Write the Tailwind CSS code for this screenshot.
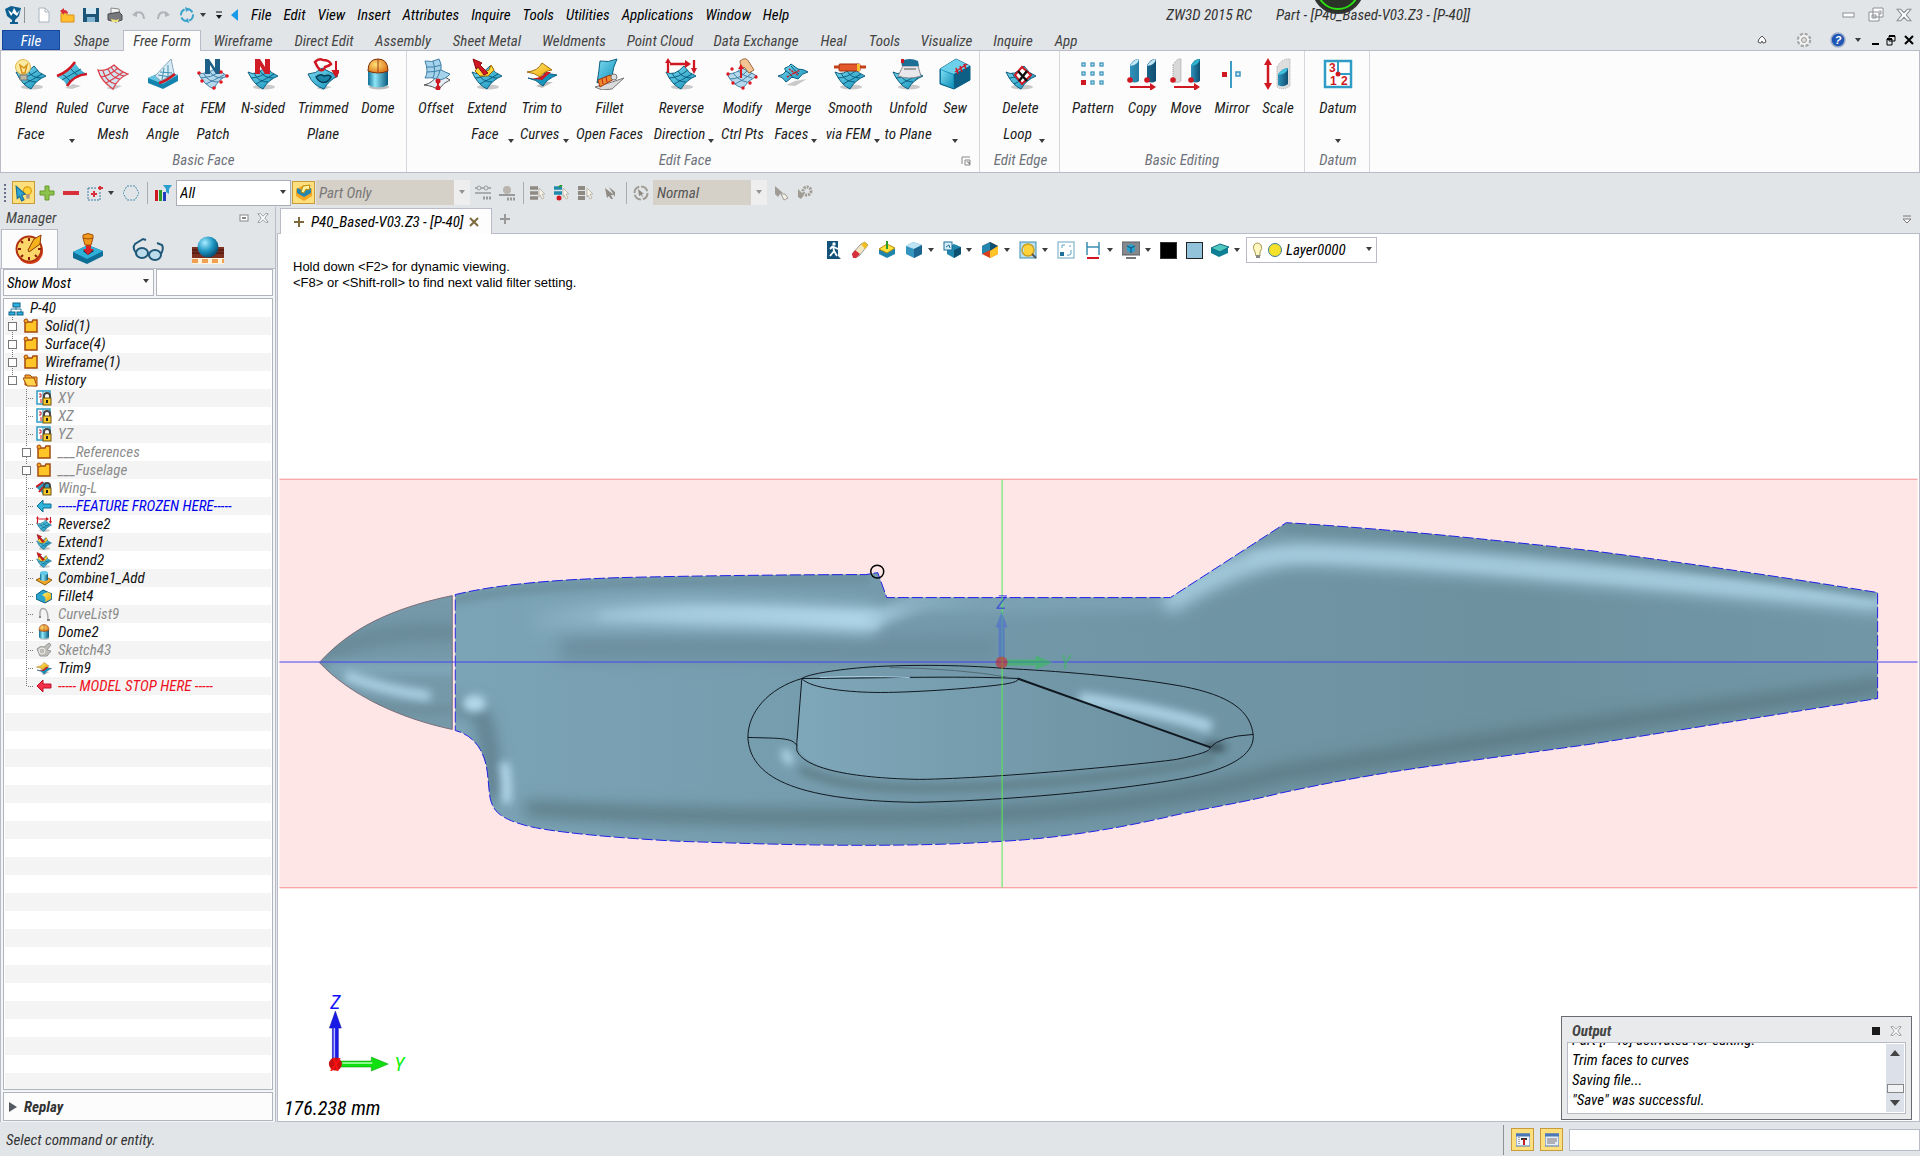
<!DOCTYPE html>
<html lang="en">
<head>
    <meta charset="UTF-8">
    <meta name="viewport" content="width=device-width, initial-scale=1.0">
    <title>ZW3D 2015 RC - [P40_Based-V03.Z3 - [P-40]]</title>
    <script src="https://cdn.jsdelivr.net/npm/@tailwindcss/browser@4"></script>
</head>
<body class="bg-[#e1e5e8] font-['Roboto_Condensed','Liberation_Sans_Narrow',Roboto,sans-serif] italic text-[15px] leading-5 text-black min-h-screen flex flex-col overflow-hidden">

<!-- Icon sprite -->
<svg class="absolute w-0 h-0" aria-hidden="true">
    <defs>
        <linearGradient id="gBlue" x1="0" y1="0" x2="1" y2="1"><stop offset="0" stop-color="#7fdcf2"/><stop offset="1" stop-color="#0f8fb8"/></linearGradient>
        <linearGradient id="gCyl" x1="0" x2="1"><stop offset="0" stop-color="#0c6f96"/><stop offset=".35" stop-color="#8fe6f8"/><stop offset="1" stop-color="#075a80"/></linearGradient>
        <linearGradient id="gDark" x1="0" x2="1"><stop offset="0" stop-color="#2f93bb"/><stop offset="1" stop-color="#0f4d70"/></linearGradient>
        <linearGradient id="gYel" x1="0" y1="0" x2="1" y2="1"><stop offset="0" stop-color="#fff07a"/><stop offset="1" stop-color="#f0a500"/></linearGradient>
        <radialGradient id="gBall" cx=".35" cy=".3" r=".8"><stop offset="0" stop-color="#a8ecff"/><stop offset=".5" stop-color="#1f97c4"/><stop offset="1" stop-color="#053c5c"/></radialGradient>
        <radialGradient id="gDome" cx=".4" cy=".4" r=".7"><stop offset="0" stop-color="#ffe37a"/><stop offset="1" stop-color="#d96a10"/></radialGradient>

        <symbol id="patch" viewBox="0 0 32 32">
            <ellipse cx="17" cy="29" rx="11" ry="2.500" fill="#000" opacity=".2"/>
            <path d="M1 14Q9 19 19 8Q24 16 31 18Q21 22 16 31Q7 27 1 14Z" fill="url(#gBlue)" stroke="#0b5f80"/>
            <path d="M4 20Q13 20 23 12M9 26Q17 22 27 16M7 15Q11 24 21 24M13 13Q17 20 26 20" fill="none" stroke="#0b5f80"/>
        </symbol>
        <symbol id="i-blend" viewBox="0 0 32 32"><use href="#patch"/><circle cx="8" cy="9" r="7.500" fill="#fbe9a0" stroke="#e0b84c"/><path d="M5 7l2 8h3l2-8-3 3z" fill="none" stroke="#d9941a" stroke-width="1.500"/><path d="M5 17h7v5H5z" fill="#b9b9a8" stroke="#777"/></symbol>
        <symbol id="i-ruled" viewBox="0 0 32 32"><path d="M9 30l8-4 8 2-9 3z" fill="#000" opacity=".2"/><path d="M1 19Q12 14 19 5Q24 13 31 16Q20 16 11 28Q9 22 1 19Z" fill="url(#gBlue)"/><path d="M6 16q5 3 9 8M14 10q5 6 9 8M6 22Q16 16 25 11" fill="none" stroke="#0b5f80"/><path d="M1 18Q12 14 19 4M11 28Q18 17 31 16" fill="none" stroke="#d01822" stroke-width="2.500"/></symbol>
        <symbol id="i-mesh" viewBox="0 0 32 32"><path d="M9 30l10-3 6 1-9 4z" fill="#000" opacity=".2"/><path d="M1 12Q8 14 17 7Q24 14 31 16Q21 20 16 31Q4 23 1 12Z" fill="#cfe5f2" stroke="#e0404a" stroke-width="1.300"/><path d="M4 19Q12 18 21 10M9 25Q17 21 26 14M6 13Q9 24 19 26M11 11Q15 20 23 21M14 9Q18 16 27 18" fill="none" stroke="#e0404a" stroke-width="1.200"/></symbol>
        <symbol id="i-angle" viewBox="0 0 32 32"><path d="M1 20l16-7 14 4v6L16 31 1 25z" fill="#1384ad"/><path d="M1 20l16-7 14 4-15 9z" fill="#62c4e0"/><path d="M8 18L24 1l3 14-13 8z" fill="#d8ecf6" stroke="#8aa8ba"/><path d="M13 14l12 1M11 17l12 2M17 10l-2 12M21 7l0 13" stroke="#3f8fb0" fill="none"/><path d="M12 25Q18 24 28 16" fill="none" stroke="#d01822" stroke-width="2.500"/></symbol>
        <symbol id="i-fem" viewBox="0 0 32 32"><path d="M1 15Q9 17 19 10L30 18Q21 21 17 31Q7 27 1 15Z" fill="#b5d9ec" stroke="#3f7fa5"/><path d="M4 20Q13 20 23 14M9 26Q17 22 27 17M7 16Q11 24 21 24M13 14Q17 20 26 20" fill="none" stroke="#3f7fa5"/><path d="M8 16V1h4l6 9V1h5v15h-4l-6-9v9z" fill="#1d5f86"/><g fill="#e01822"><circle cx="2" cy="15" r="1.800"/><circle cx="30" cy="18" r="1.800"/><circle cx="5" cy="23" r="1.800"/><circle cx="17" cy="30" r="1.800"/><circle cx="24" cy="14" r="1.800"/><circle cx="24" cy="24" r="1.800"/></g></symbol>
        <symbol id="i-nsided" viewBox="0 0 32 32"><use href="#patch"/><path d="M8 16V1h5l5 8V1h5v15h-5l-5-8v8z" fill="#d01c26"/></symbol>
        <symbol id="i-trimmed" viewBox="0 0 32 32"><path d="M9 30l10-2 6 1-9 3z" fill="#000" opacity=".2"/><path d="M1 16q8 0 14-6l16 8q-9 4-14 13Q6 28 1 16Z" fill="url(#gBlue)" stroke="#0b5f80"/><path d="M9 19q4-4 8-1 6-2 7 1-2 4-5 5-6 2-10-5z" fill="#1c85a8" stroke="#043c55" stroke-width="1.500"/><path d="M8 4q4-4 8-2 6 0 8 4-2 2-6 3-1 4-5 3-3-3-5-8z" fill="none" stroke="#d01822" stroke-width="2.500"/><path d="M29 3v13m-3-3l3 5 3-5z" stroke="#d01822" stroke-width="2" fill="#d01822"/></symbol>
        <symbol id="i-dome" viewBox="0 0 32 32"><ellipse cx="17" cy="29" rx="10" ry="2.500" fill="#000" opacity=".25"/><path d="M6 12v15q10 5 20 0V12z" fill="url(#gCyl)"/><path d="M6 13Q6 1 16 1t10 12q-10 4-20 0z" fill="url(#gDome)" stroke="#7d3208"/><path d="M16 1v13" stroke="#a03a10"/></symbol>
        <symbol id="i-offset" viewBox="0 0 32 32"><path d="M4 27q10-2 14-12l12 7q-6 2-12 10-4-4-14-5z" fill="#e5eef4" stroke="#555"/><path d="M5 3q6 2 14-2 3 5 2 11 4 2 9 4-5 6-13 6-2-3-12-2 4-6 0-17z" fill="#a5d3ec" stroke="#3f7fa5"/><path d="M13 3q3 10 0 17M6 9q8 1 15-2M7 14q8 0 14-2M20 12q-1 6-4 9" fill="none" stroke="#3f7fa5"/><path d="M18 23v7" stroke="#d01822" stroke-width="2"/><circle cx="18" cy="23" r="2.500" fill="#d01822"/><circle cx="18" cy="30" r="2.500" fill="#d01822"/></symbol>
        <symbol id="i-extend" viewBox="0 0 32 32"><use href="#patch"/><path d="M4 13l4-5 5 6 5-2 2-5 3 5-6 6-8 0z" fill="#ffd83a" stroke="#9a6a00"/><path d="M13 17l-6-8-2 2-3-10 9 4-2 2 8 8z" fill="#d01822" stroke="#8d0c14"/></symbol>
        <symbol id="i-trim" viewBox="0 0 32 32"><path d="M10 28l8-4 9 0-11 6z" fill="#000" opacity=".25"/><path d="M2 20q12 4 17-5l12 2q-10 4-14 11-7-7-15-8z" fill="#1593bc" stroke="#0b5f80"/><path d="M4 20q12 1 16-6l5 0-9 8z" fill="#d01822"/><path d="M1 14Q12 13 16 5l10 7q-8 1-12 7-5-4-13-5z" fill="url(#gYel)" stroke="#a07010"/></symbol>
        <symbol id="i-fillet" viewBox="0 0 32 32"><path d="M1 29l17-5 12-4-12 11-10 1z" fill="#dadada" stroke="#777"/><path d="M6 3Q14 5 23 1q-4 8-5 17L3 25Q5 14 6 3Z" fill="url(#gBlue)" stroke="#0b5f80"/><path d="M4 22l12-5 4 4-14 8z" fill="#e98c2b" stroke="#a03010"/><path d="M8 21l1 5m3-7l1 5" stroke="#d01822"/><circle cx="20" cy="19" r="3" fill="#ddd" stroke="#777"/></symbol>
        <symbol id="i-reverse" viewBox="0 0 32 32"><use href="#patch"/><path d="M3 15V4m26-2v9M5 6h18" stroke="#d01822" stroke-width="2.300" fill="none"/><path d="M0 5l3-5 3 5zM26 10l3 6 3-6zM20 2l6 4-6 4z" fill="#d01822"/></symbol>
        <symbol id="i-modify" viewBox="0 0 32 32"><path d="M1 16q9 0 15-6l15 8q-9 4-14 12Q7 28 1 16Z" fill="#b5d9ec" stroke="#3f7fa5"/><path d="M4 21q10 0 17-8M9 26q9-4 17-11M7 15q6 8 14 9M12 13q7 6 14 7" fill="none" stroke="#3f7fa5"/><path d="M14 3q6-5 9 1l5 8-5 3-5-6-3 2z" fill="#f3c595" stroke="#9d6a3c"/><path d="M15 20V8" stroke="#d01822" stroke-width="2"/><g fill="#e01822"><path d="M12 11l3-5 3 5z"/><circle cx="2" cy="16" r="1.700"/><circle cx="7" cy="25" r="1.700"/><circle cx="17" cy="30" r="1.700"/><circle cx="24" cy="25" r="1.700"/><circle cx="30" cy="19" r="1.700"/><circle cx="6" cy="11" r="1.700"/></g></symbol>
        <symbol id="i-merge" viewBox="0 0 32 32"><path d="M9 27l9-4 12-2-12 7z" fill="#000" opacity=".2"/><path d="M1 18q6-1 8-5-2-2-1-3 4-1 6-4l7 5q6 0 10 3-6 1-10 7l-6-2q-3 3-6 5-3-5-8-6z" fill="url(#gBlue)" stroke="#0b5f80"/><path d="M9 13q6 3 7 7M14 8q5 6 8 8" stroke="#0b5f80" fill="none"/><path d="M10 19L23 12M12 11l9 6" stroke="#d01822" stroke-width="1.500" stroke-dasharray="2 1"/></symbol>
        <symbol id="i-smooth" viewBox="0 0 32 32"><use href="#patch"/><rect x="5" y="6" width="21" height="7" rx="1" fill="#e3592b" stroke="#a02c0a"/><path d="M0 9h5M26 9h6" stroke="#c4401a" stroke-width="3"/><rect x="23" y="6" width="3" height="7" fill="#f7c030"/></symbol>
        <symbol id="i-unfold" viewBox="0 0 32 32"><use href="#patch"/><path d="M6 18l5-10h15l3 10q-12 4-23 0z" fill="#e8e8ec" stroke="#8a8a90"/><path d="M9 3q9-4 17 0l1 5H10z" fill="#1d6f96"/><rect x="9" y="1" width="3" height="4" fill="#d01822"/><path d="M12 11h12" stroke="#555"/></symbol>
        <symbol id="i-sew" viewBox="0 0 32 32"><path d="M1 11L17 1l14 7v14L15 31 1 26z" fill="#1593bc" stroke="#0b5f80"/><path d="M1 11L17 1l14 7-16 8z" fill="#6cd0ea"/><path d="M15 16v15l16-9V8z" fill="#0d5f86"/><path d="M2 12l12 5v13L2 25z" fill="url(#gBlue)"/><path d="M16 14L28 6M17 10l2 6m2-8l2 6m2-8l2 5" stroke="#d01822" stroke-width="1.500" fill="none"/></symbol>
        <symbol id="i-loop" viewBox="0 0 32 32"><use href="#patch"/><path d="M10 17l7-8 9 8-9 9z" fill="#fff" stroke="#d01822" stroke-width="2"/><path d="M13 13l9 10M22 13l-8 10" stroke="#111" stroke-width="2.500"/></symbol>
        <symbol id="i-pattern" viewBox="0 0 32 32"><g fill="#cfeaf6" stroke="#3d94bd" stroke-width="1.300"><rect x="5" y="5" width="3" height="3"/><rect x="14" y="5" width="3" height="3"/><rect x="23" y="5" width="3" height="3"/><rect x="5" y="14" width="3" height="3"/><rect x="14" y="14" width="3" height="3"/><rect x="23" y="14" width="3" height="3"/><rect x="14" y="23" width="3" height="3"/><rect x="23" y="23" width="3" height="3"/></g><rect x="4" y="22" width="5" height="5" fill="#d01822"/></symbol>
        <symbol id="i-copy" viewBox="0 0 32 32"><path d="M4 7q4-7 9-6v22q-4 3-9 0zM21 7q4-7 9-6v22q-4 3-9 0z" fill="url(#gDark)"/><path d="M4 8q4-7 9-7-1 6-9 7zM21 8q4-7 9-7-1 6-9 7z" fill="#bfe6f5"/><circle cx="4" cy="22" r="2.800" fill="#d01822"/><circle cx="21" cy="22" r="2.800" fill="#d01822"/><path d="M4 28h20v-3l6 4-6 4v-3H4z" fill="#d01822"/></symbol>
        <symbol id="i-move" viewBox="0 0 32 32"><path d="M3 7q4-7 8-6v22q-4 3-8 0z" fill="#d8d8d8" stroke="#999" stroke-dasharray="1 1"/><path d="M21 7q4-7 9-6v22q-4 3-9 0z" fill="url(#gDark)"/><path d="M21 8q4-7 9-7-1 6-9 7z" fill="#2fb3cc"/><circle cx="3" cy="22" r="2.800" fill="#d01822"/><circle cx="21" cy="22" r="2.800" fill="#d01822"/><path d="M4 28h20v-3l6 4-6 4v-3H4z" fill="#d01822"/></symbol>
        <symbol id="i-mirror" viewBox="0 0 32 32"><path d="M15 3v27" stroke="#3d9cc4" stroke-width="2"/><rect x="6" y="14" width="5" height="5" fill="#d01822"/><rect x="20" y="14" width="4" height="4" fill="#cfeaf6" stroke="#3d94bd" stroke-width="1.500"/></symbol>
        <symbol id="i-scale" viewBox="0 0 32 32"><path d="M6 4v24" stroke="#d01822" stroke-width="2.500"/><path d="M2 7l4-7 4 7zM2 25l4 7 4-7z" fill="#d01822"/><path d="M15 9Q20 0 28 1v27q-7 5-13 1z" fill="#dedede" stroke="#aaa" stroke-dasharray="1 1"/><path d="M16 16q5-6 10-6v16q-5 4-10 1z" fill="url(#gDark)"/><path d="M16 17q4-7 10-7-1 6-10 7z" fill="#3fc0dd"/></symbol>
        <symbol id="i-datum" viewBox="0 0 32 32"><rect x="3" y="3" width="26" height="26" fill="#fff" stroke="#2e9cc4" stroke-width="2.500"/><path d="M16 3v13h13" fill="none" stroke="#2e9cc4" stroke-width="2"/><circle cx="16" cy="16" r="2.500" fill="#d01822"/><g fill="#d01822" font-family="Liberation Sans" font-style="normal" font-weight="bold" font-size="12"><text x="7" y="14">3</text><text x="8" y="27">1</text><text x="19" y="27">2</text></g></symbol>

        <symbol id="i-folder" viewBox="0 0 16 16"><path d="M2 4h7l1-2h4v12H2z" fill="#ffc425" stroke="#a34a10" stroke-width="1.500"/><circle cx="3" cy="3" r="2" fill="#f5a623" stroke="#a34a10"/></symbol>
        <symbol id="i-folderopen" viewBox="0 0 16 16"><path d="M2 13V3h5l2 2h5v9z" fill="#f5a623" stroke="#a34a10"/><path d="M0 6h11l3 8H4z" fill="#ffd34a" stroke="#a34a10"/></symbol>
        <symbol id="i-root" viewBox="0 0 16 16"><path d="M8 7v3M3 12V9h10v3" fill="none" stroke="#2e7fa0"/><rect x="5" y="3" width="7" height="4" fill="#2cb4e0" stroke="#0f5f85"/><rect x="1" y="12" width="6" height="3" fill="#2cb4e0" stroke="#0f5f85"/><rect x="9" y="12" width="6" height="3" fill="#2cb4e0" stroke="#0f5f85"/></symbol>
        <symbol id="i-lock" viewBox="0 0 16 16"><path d="M8 9V6q0-3 3-3t3 3v3" fill="none" stroke="#444" stroke-width="2"/><rect x="7" y="8" width="8" height="7" fill="#f7c92a" stroke="#6b5310"/><path d="M11 10v3" stroke="#222" stroke-width="2"/></symbol>
        <symbol id="i-plane" viewBox="0 0 16 16"><rect x="1" y="1" width="13" height="13" fill="#fff" stroke="#2e9cc4" stroke-width="1.500"/><path d="M7 1v13" stroke="#2e9cc4"/><path d="M3 4h2v3H3m2 2v4" stroke="#d01822" fill="none"/><use href="#i-lock"/></symbol>
        <symbol id="i-wing" viewBox="0 0 16 16"><path d="M0 7l7-5 8 4-8 8z" fill="#2b9cc0"/><path d="M0 7l7-5M3 12l4-5" stroke="#d01822" stroke-width="2"/><use href="#i-lock"/></symbol>
        <symbol id="i-left" viewBox="0 0 16 16"><path d="M1 8l6-6v4h8v4H7v4z" fill="#2fb4dc" stroke="#0f6f95"/></symbol>
        <symbol id="i-stop" viewBox="0 0 16 16"><path d="M1 8l6-6v4h8v4H7v4z" fill="#f2304a" stroke="#c01028"/></symbol>
        <symbol id="i-combine" viewBox="0 0 16 16"><path d="M0 10l8-4 8 4-7 5z" fill="#f0a72a" stroke="#95600c"/><path d="M4 3v7q4 2 8 0V3z" fill="url(#gCyl)"/><ellipse cx="8" cy="3" rx="4" ry="2" fill="#5fc8e6"/></symbol>
        <symbol id="i-fillet4" viewBox="0 0 16 16"><path d="M0 7l7-5 9 4v5l-7 4-9-4z" fill="#2aa4cc" stroke="#0b5f80"/><path d="M6 7q6-5 9-1l0 5-6 3q2-5-3-7z" fill="url(#gYel)"/></symbol>
        <symbol id="i-curve" viewBox="0 0 16 16"><path d="M4 10V6q1-5 5-3 3 2 3 11" fill="none" stroke="#aaa" stroke-width="1.500"/><path d="M3 11h2m6 3h3" stroke="#888" stroke-width="2"/></symbol>
        <symbol id="i-sketch" viewBox="0 0 16 16"><path d="M1 7q3-4 7-2l5-4 2 2-4 5 4 1-4 5H4z" fill="#bdbdb5" stroke="#999"/><circle cx="6" cy="9" r="3" fill="none" stroke="#eee"/></symbol>
        <symbol id="i-arrow" viewBox="0 0 8 8"><path d="M1 2h6L4 6z" fill="#3c3c3c"/></symbol>
        <symbol id="i-cursor" viewBox="0 0 16 16"><path d="M9 3l6 6-3 0 2 4-2 1-2-4-1 2z" fill="#f8f4ea" stroke="#bdb9ae"/></symbol>
        <symbol id="i-cube" viewBox="0 0 18 18"><path d="M1 5l7-4 9 3v9l-8 4-8-4z" fill="#3494c0"/><path d="M1 5l7-4 9 3-8 4z" fill="#bfe3f2"/><path d="M9 8l8-4v9l-8 4z" fill="#1b6590"/></symbol>
        <symbol id="i-close" viewBox="0 0 14 14"><path d="M1 2h3l3 3 3-3h3L9 7l4 5h-3L7 9l-3 3H1l4-5z" fill="#fff" stroke="#8b8f94"/></symbol>
    </defs>
</svg>

<!-- Quick access bar and menu -->
<header class="relative h-[30px] flex items-center pl-1 shrink-0 whitespace-nowrap">
    <svg class="w-5 h-5" viewBox="0 0 20 20"><path d="M1 4l6-3 10 2-2 8-4 4v2h3v2H6v-2h2v-2L3 11z" fill="#0d5f90"/><path d="M4 5l4 3 2-5 3 5 3-3-3 6-4-3-2 3z" fill="#fff"/></svg>
    <span class="w-px h-4 bg-[#8d9196] mr-1.5"></span>
    <button class="w-6 h-5 grid place-items-center" aria-label="New"><svg class="w-4 h-4" viewBox="0 0 16 16"><path d="M4 1h6l4 4v10H4z" fill="#fff" stroke="#a9b4bd"/><path d="M10 1v4h4" fill="none" stroke="#a9b4bd"/></svg></button>
    <button class="w-6 h-5 grid place-items-center" aria-label="Open"><svg class="w-4 h-4" viewBox="0 0 16 16"><path d="M2 6h5l1 2h7v7H2z" fill="#ffbf2e" stroke="#d8901a"/><path d="M9 7Q9 3 5 3V1L1 4l4 4V6q3 0 4 1z" fill="#d8303a"/></svg></button>
    <button class="w-6 h-5 grid place-items-center" aria-label="Save"><svg class="w-4 h-4" viewBox="0 0 16 16"><path d="M0 1h16v14H0z" fill="#1c5578"/><path d="M3 1h10v6H3z" fill="#d4e8f3"/><path d="M4 10h8v5H4z" fill="#7fb3cf"/></svg></button>
    <button class="w-6 h-5 grid place-items-center" aria-label="Print"><svg class="w-4 h-4" viewBox="0 0 16 16"><path d="M4 1l8 1 1 5H4z" fill="#f4f4f4" stroke="#888"/><path d="M1 7l11-2 3 3v5l-6 2-8-2z" fill="#77797c" stroke="#4a4a4a"/><path d="M4 12l5 1 3-1-1 3H5z" fill="#f0e27a"/></svg></button>
    <button class="w-6 h-5 grid place-items-center" aria-label="Undo"><svg class="w-4 h-4" viewBox="0 0 16 16"><path d="M3 7q9-5 10 5" fill="none" stroke="#b0b4b8" stroke-width="2"/><path d="M1 8l5-4v6z" fill="#b0b4b8"/></svg></button>
    <button class="w-6 h-5 grid place-items-center" aria-label="Redo"><svg class="w-4 h-4" viewBox="0 0 16 16"><path d="M13 7Q4 2 3 12" fill="none" stroke="#b0b4b8" stroke-width="2"/><path d="M15 8l-5-4v6z" fill="#b0b4b8"/></svg></button>
    <button class="w-6 h-5 grid place-items-center" aria-label="Regenerate"><svg class="w-4 h-4" viewBox="0 0 16 16"><circle cx="8" cy="8" r="6" fill="none" stroke="#3ba3cc" stroke-width="2" stroke-dasharray="7 2"/><path d="M6 0l5 2-4 3zM10 16l-5-2 4-3z" fill="#3ba3cc"/></svg></button>
    <svg class="w-2 h-2"><use href="#i-arrow"/></svg>
    <svg class="w-2 h-3 ml-2" viewBox="0 0 8 12"><path d="M1 3h6" stroke="#111"/><path d="M1 6h6L4 10z" fill="#111"/></svg>
    <svg class="w-2 h-3 ml-2 mr-3" viewBox="0 0 8 12"><path d="M7 0v12L0 6z" fill="#1a9ae8"/></svg>
    <nav class="flex gap-3">
        <a href="#">File</a><a href="#">Edit</a><a href="#">View</a><a href="#">Insert</a><a href="#">Attributes</a><a href="#">Inquire</a><a href="#">Tools</a><a href="#">Utilities</a><a href="#">Applications</a><a href="#">Window</a><a href="#">Help</a>
    </nav>
    <div class="ml-auto flex items-center text-[#333]">
        <span class="mr-6">ZW3D 2015 RC</span>
        <span class="w-[566px]">Part - [P40_Based-V03.Z3 - [P-40]]</span>
    </div>
    <div class="flex items-center gap-3 mr-2.5 w-[68px] justify-between">
        <button aria-label="Minimize"><svg class="w-3.5 h-3.5" viewBox="0 0 14 14"><rect x="1" y="5" width="11" height="4" fill="#fff" stroke="#8b8f94"/></svg></button>
        <button aria-label="Restore"><svg class="w-4 h-4" viewBox="0 0 16 16"><path d="M5 1h10v9H5zM1 5h10v9H1z" fill="#fff" stroke="#8b8f94"/><path d="M4 8h4v3H4zM11 4h2v3h-2" fill="none" stroke="#8b8f94"/></svg></button>
        <button aria-label="Close"><svg class="w-4 h-4"><use href="#i-close"/></svg></button>
    </div>
    <!-- Recording badge over the title -->
    <div class="absolute top-[-38px] right-[556px] w-[52px] h-[52px] rounded-full bg-[#2b3328] border-2 border-[#333] p-0.5"><div class="w-full h-full rounded-full border-2 border-[#2ae010]"></div></div>
</header>

<!-- Ribbon tabs -->
<nav class="h-[21px] flex items-stretch pl-0.5 shrink-0 text-[#444] leading-[22px] border-b border-[#b9bcc8] whitespace-nowrap">
    <a href="#" class="w-[58px] bg-[#2962b8] text-white border border-[#1647a0] leading-5 text-center">File</a>
    <a href="#" class="w-[63px] text-center">Shape</a>
    <a href="#" class="w-[78px] -mb-px bg-[#fcfcfc] border border-b-0 border-[#b9bcc8] leading-5 text-center">Free Form</a>
    <a href="#" class="w-[84px] text-center">Wireframe</a>
    <a href="#" class="w-[78px] text-center">Direct Edit</a>
    <a href="#" class="w-[80px] text-center">Assembly</a>
    <a href="#" class="w-[88px] text-center">Sheet Metal</a>
    <a href="#" class="w-[86px] text-center">Weldments</a>
    <a href="#" class="w-[86px] text-center">Point Cloud</a>
    <a href="#" class="w-[106px] text-center">Data Exchange</a>
    <a href="#" class="w-[49px] text-center">Heal</a>
    <a href="#" class="w-[53px] text-center">Tools</a>
    <a href="#" class="w-[71px] text-center">Visualize</a>
    <a href="#" class="w-[62px] text-center">Inquire</a>
    <a href="#" class="w-[44px] text-center">App</a>
    <div class="ml-auto flex items-center mr-1.5">
        <svg class="w-3 h-3 mr-7" viewBox="0 0 12 12"><path d="M2 8q0-3 4-6 4 3 4 6l-2 1H7L6 7 5 9H4z" fill="#fff" stroke="#555"/></svg>
        <svg class="w-4 h-4 mr-[18px]" viewBox="0 0 16 16"><circle cx="8" cy="8" r="6" fill="#f2f2f2" stroke="#a5a5a5" stroke-width="2.500" stroke-dasharray="3 1.700"/><circle cx="8" cy="8" r="5" fill="#f2f2f2"/><circle cx="8" cy="8" r="2.500" fill="#ddd" stroke="#999"/></svg>
        <svg class="w-4 h-4 mr-2" viewBox="0 0 16 16"><circle cx="8" cy="8" r="7" fill="#1f55b5" stroke="#9fb0c8" stroke-width="1.500"/><text x="8" y="12" text-anchor="middle" font-size="11" font-weight="bold" fill="#fff" font-family="Liberation Sans">?</text></svg>
        <svg class="w-2 h-2 mr-2"><use href="#i-arrow"/></svg>
        <svg class="w-2.5 h-3 mr-1.5" viewBox="0 0 10 12"><path d="M2 10h7" stroke="#000" stroke-width="2"/></svg>
        <svg class="w-2.5 h-3 mr-2" viewBox="0 0 10 12"><path d="M3 2h6v5H3zM1 5h5v6H1z" fill="#e1e5e8" stroke="#000"/><path d="M3 2h6M1 5h5" stroke="#000" stroke-width="2"/></svg>
        <svg class="w-2.5 h-3" viewBox="0 0 10 12"><path d="M1 2l8 8M9 2l-8 8" stroke="#000" stroke-width="2"/></svg>
    </div>
</nav>

<!-- Ribbon -->
<section class="h-[122px] flex shrink-0 bg-[#fcfcfc] border-x border-b border-[#b9bcc8] leading-[26px] text-center whitespace-nowrap text-[#1c1c1c]">
    <div class="w-[406px] flex flex-col border-r border-[#d5d7dc]">
        <div class="flex pl-[9px] pt-[7px] h-[98px] shrink-0">
            <button class="w-[42px] flex flex-col items-center"><svg class="w-8 h-8 mb-[5px] shrink-0"><use href="#i-blend"/></svg><span>Blend</span><span>Face</span></button>
            <button class="w-[40px] flex flex-col items-center"><svg class="w-8 h-8 mb-[5px] shrink-0"><use href="#i-ruled"/></svg><span>Ruled</span><svg class="w-2 h-2 mt-4"><use href="#i-arrow"/></svg></button>
            <button class="w-[42px] flex flex-col items-center"><svg class="w-8 h-8 mb-[5px] shrink-0"><use href="#i-mesh"/></svg><span>Curve</span><span>Mesh</span></button>
            <button class="w-[58px] flex flex-col items-center"><svg class="w-8 h-8 mb-[5px] shrink-0"><use href="#i-angle"/></svg><span>Face at</span><span>Angle</span></button>
            <button class="w-[42px] flex flex-col items-center"><svg class="w-8 h-8 mb-[5px] shrink-0"><use href="#i-fem"/></svg><span>FEM</span><span>Patch</span></button>
            <button class="w-[58px] flex flex-col items-center"><svg class="w-8 h-8 mb-[5px] shrink-0"><use href="#i-nsided"/></svg><span>N-sided</span></button>
            <button class="w-[62px] flex flex-col items-center"><svg class="w-8 h-8 mb-[5px] shrink-0"><use href="#i-trimmed"/></svg><span>Trimmed</span><span>Plane</span></button>
            <button class="w-[48px] flex flex-col items-center"><svg class="w-8 h-8 mb-[5px] shrink-0"><use href="#i-dome"/></svg><span>Dome</span></button>
        </div>
        <div class="text-[#6d7179] leading-[23px]">Basic Face</div>
    </div>
    <div class="w-[573px] flex flex-col border-r border-[#d5d7dc] relative">
        <div class="flex pl-[5px] pt-[7px] h-[98px] shrink-0">
            <button class="w-[48px] flex flex-col items-center"><svg class="w-8 h-8 mb-[5px] shrink-0"><use href="#i-offset"/></svg><span>Offset</span></button>
            <button class="w-[54px] flex flex-col items-center"><svg class="w-8 h-8 mb-[5px] shrink-0"><use href="#i-extend"/></svg><span>Extend</span><span class="flex items-end pl-3">Face<svg class="w-2 h-2 ml-2 mb-0.5"><use href="#i-arrow"/></svg></span></button>
            <button class="w-[56px] flex flex-col items-center"><svg class="w-8 h-8 mb-[5px] shrink-0"><use href="#i-trim"/></svg><span>Trim to</span><span class="flex items-end pl-1.5">Curves<svg class="w-2 h-2 ml-0.5 mb-0.5"><use href="#i-arrow"/></svg></span></button>
            <button class="w-[80px] flex flex-col items-center"><svg class="w-8 h-8 mb-[5px] shrink-0"><use href="#i-fillet"/></svg><span>Fillet</span><span>Open Faces</span></button>
            <button class="w-[64px] flex flex-col items-center"><svg class="w-8 h-8 mb-[5px] shrink-0"><use href="#i-reverse"/></svg><span>Reverse</span><span class="flex items-end pl-1.5">Direction<svg class="w-2 h-2 ml-0.5 mb-0.5"><use href="#i-arrow"/></svg></span></button>
            <button class="w-[58px] flex flex-col items-center"><svg class="w-8 h-8 mb-[5px] shrink-0"><use href="#i-modify"/></svg><span>Modify</span><span>Ctrl Pts</span></button>
            <button class="w-[44px] flex flex-col items-center"><svg class="w-8 h-8 mb-[5px] shrink-0"><use href="#i-merge"/></svg><span>Merge</span><span class="flex items-end pl-1.5">Faces<svg class="w-2 h-2 ml-0.5 mb-0.5"><use href="#i-arrow"/></svg></span></button>
            <button class="w-[70px] flex flex-col items-center"><svg class="w-8 h-8 mb-[5px] shrink-0"><use href="#i-smooth"/></svg><span>Smooth</span><span class="flex items-end pl-1.5">via FEM<svg class="w-2 h-2 ml-0.5 mb-0.5"><use href="#i-arrow"/></svg></span></button>
            <button class="w-[46px] flex flex-col items-center"><svg class="w-8 h-8 mb-[5px] shrink-0"><use href="#i-unfold"/></svg><span>Unfold</span><span>to Plane</span></button>
            <button class="w-[48px] flex flex-col items-center"><svg class="w-8 h-8 mb-[5px] shrink-0"><use href="#i-sew"/></svg><span>Sew</span><svg class="w-2 h-2 mt-4"><use href="#i-arrow"/></svg></button>
        </div>
        <div class="text-[#6d7179] leading-[23px] pr-4">Edit Face</div>
        <svg class="absolute right-2 bottom-1.5 w-2.5 h-2.5" viewBox="0 0 10 10"><path d="M1 8V1h8M4 4h5v5H4z" fill="none" stroke="#888"/><path d="M5 5l4 4V6z" fill="#888"/></svg>
    </div>
    <div class="w-[80px] flex flex-col border-r border-[#d5d7dc]">
        <div class="flex justify-center pl-0.5 pt-[7px] h-[98px] shrink-0">
            <button class="flex flex-col items-center"><svg class="w-8 h-8 mb-[5px] shrink-0"><use href="#i-loop"/></svg><span>Delete</span><span class="flex items-end pl-2">Loop<svg class="w-2 h-2 ml-1.5 mb-0.5"><use href="#i-arrow"/></svg></span></button>
        </div>
        <div class="text-[#6d7179] leading-[23px] pl-0.5">Edit Edge</div>
    </div>
    <div class="w-[245px] flex flex-col border-r border-[#d5d7dc]">
        <div class="flex pl-[7px] pt-[7px] h-[98px] shrink-0">
            <button class="w-[52px] flex flex-col items-center"><svg class="w-8 h-8 mb-[5px] shrink-0"><use href="#i-pattern"/></svg><span>Pattern</span></button>
            <button class="w-[46px] flex flex-col items-center"><svg class="w-8 h-8 mb-[5px] shrink-0"><use href="#i-copy"/></svg><span>Copy</span></button>
            <button class="w-[42px] flex flex-col items-center"><svg class="w-8 h-8 mb-[5px] shrink-0"><use href="#i-move"/></svg><span>Move</span></button>
            <button class="w-[50px] flex flex-col items-center"><svg class="w-8 h-8 mb-[5px] shrink-0"><use href="#i-mirror"/></svg><span>Mirror</span></button>
            <button class="w-[42px] flex flex-col items-center"><svg class="w-8 h-8 mb-[5px] shrink-0"><use href="#i-scale"/></svg><span>Scale</span></button>
        </div>
        <div class="text-[#6d7179] leading-[23px]">Basic Editing</div>
    </div>
    <div class="w-[65px] flex flex-col border-r border-[#d5d7dc]">
        <div class="flex justify-center pl-0.5 pt-[7px] h-[98px] shrink-0">
            <button class="flex flex-col items-center"><svg class="w-8 h-8 mb-[5px] shrink-0"><use href="#i-datum"/></svg><span>Datum</span><svg class="w-2 h-2 mt-4"><use href="#i-arrow"/></svg></button>
        </div>
        <div class="text-[#6d7179] leading-[23px] pl-0.5">Datum</div>
    </div>
</section>

<!-- Selection toolbar -->
<section class="h-[34px] flex items-center pt-[5px] pl-1 shrink-0">
    <svg class="w-1 h-5 mr-1" viewBox="0 0 4 20"><path d="M1 1v18" stroke="#6b6f8c" stroke-width="2" stroke-dasharray="2 2"/></svg>
    <button class="w-[23px] h-[23px] bg-[#fddf7d] border border-[#c79a3c] grid place-items-center" aria-label="Pick"><svg class="w-[18px] h-[18px]" viewBox="0 0 16 16"><circle cx="11" cy="6" r="3.500" fill="#ffd23a" stroke="#d89a10"/><path d="M10 9h3v4h-3z" fill="#a98"/><path d="M1 2l8 7-3 1 2 4-2 1-2-4-2 2z" fill="#2fa4d0" stroke="#1a6f98"/></svg></button>
    <button class="w-6 grid place-items-center" aria-label="Add"><svg class="w-4 h-4" viewBox="0 0 16 16"><path d="M6 1h4v5h5v4h-5v5H6v-5H1V6h5z" fill="#8bc34a" stroke="#6a9a2c"/></svg></button>
    <button class="w-6 grid place-items-center" aria-label="Remove"><svg class="w-4 h-4" viewBox="0 0 16 16"><path d="M0 6h16v4H0z" fill="#d8303a"/></svg></button>
    <button class="w-6 grid place-items-center" aria-label="Window pick"><svg class="w-4 h-4" viewBox="0 0 16 16"><path d="M1 3h9M1 3v12h12V7" fill="none" stroke="#3a7f9e" stroke-dasharray="2 1"/><path d="M7 6v6M4 9h6M13 1v4M11 3h5" stroke="#d8303a" stroke-width="2"/></svg></button>
    <svg class="w-2 h-2"><use href="#i-arrow"/></svg>
    <button class="w-8 grid place-items-center" aria-label="Polygon pick"><svg class="w-4 h-4" viewBox="0 0 16 16"><path d="M4 1h8l4 7-4 7H4L0 8z" fill="none" stroke="#4a8fb0" stroke-dasharray="2 1"/></svg></button>
    <span class="w-px h-[22px] bg-[#a9adb2] mr-1.5"></span>
    <svg class="w-[18px] h-[18px] mr-1" viewBox="0 0 18 18"><path d="M1 6h3v11H1z" fill="#d01822"/><path d="M5 6h3v11H5z" fill="#2a9a2a"/><path d="M9 8h3v9H9z" fill="#1f3fbf"/><path d="M9 1h9l-3 4v5l-3-2V5z" fill="#2aa0d0"/></svg>
    <div class="relative"><select aria-label="Filter" class="appearance-none w-[115px] h-[26px] bg-white border border-[#a9adb8] pl-[3px] italic rounded-none"><option>All</option></select><svg class="absolute right-1 top-2 w-2 h-2"><use href="#i-arrow"/></svg></div>
    <button class="w-[23px] h-[23px] bg-[#fddf7d] border border-[#c79a3c] grid place-items-center mx-px" aria-label="Part scope"><svg class="w-[18px] h-[18px]" viewBox="0 0 18 18"><path d="M1 5l8-4 8 4v7l-8 5-8-5z" fill="#f5a623"/><path d="M2 4v5l7 4 7-4V4l-7 3z" fill="#2387b0"/><path d="M8 2l7-1-1 5-3-1-2 4-3-1z" fill="#fff3a0" stroke="#b98a10"/></svg></button>
    <div class="relative"><select aria-label="Scope" disabled class="appearance-none w-[154px] h-[25px] bg-[#d5d0c8] text-[#777] pl-[3px] italic rounded-none opacity-100 border-r-[16px] border-[#eeeeee]"><option>Part Only</option></select><svg class="absolute right-1 top-2 w-2 h-2 opacity-50"><use href="#i-arrow"/></svg></div>
    <svg class="w-4 h-4 ml-[5px] mr-2" viewBox="0 0 16 16"><path d="M0 3h16M0 8h16" stroke="#999" stroke-width="1.500"/><circle cx="4" cy="3" r="2" fill="#e1e5e8" stroke="#999"/><circle cx="11" cy="3" r="2" fill="#e1e5e8" stroke="#999"/><path d="M8 13h8" stroke="#999" stroke-width="3" stroke-dasharray="2 1"/></svg>
    <svg class="w-4 h-4 mr-2" viewBox="0 0 16 16"><circle cx="8" cy="5" r="4" fill="#b9b5ae"/><path d="M0 10h16" stroke="#999" stroke-width="2"/><path d="M8 14h8" stroke="#999" stroke-width="3" stroke-dasharray="2 1"/></svg>
    <span class="w-px h-[22px] bg-[#a9adb2] mr-1.5"></span>
    <svg class="w-4 h-4 mr-2" viewBox="0 0 16 16"><path d="M0 3h8M0 8h8M0 13h8" stroke="#8f8b83" stroke-width="3.500"/><use href="#i-cursor"/></svg>
    <svg class="w-4 h-4 mr-2" viewBox="0 0 16 16"><path d="M0 3h8M0 8h8" stroke="#1f8aae" stroke-width="3.500"/><path d="M5 2l3-2" stroke="#2a9a2a" stroke-width="2"/><circle cx="5" cy="13" r="2.500" fill="#d01822"/><use href="#i-cursor"/></svg>
    <svg class="w-4 h-4 mr-2" viewBox="0 0 16 16"><path d="M0 3h7M0 8h7M0 13h7" stroke="#8f8b83" stroke-width="4"/><use href="#i-cursor"/></svg>
    <svg class="w-4 h-4 mr-2" viewBox="0 0 16 16"><path d="M3 3l9 7-3 0 2 4-2 0-2-3-2 2zM7 2l6 5v5z" fill="#8f8b83"/></svg>
    <span class="w-px h-[22px] bg-[#a9adb2] mr-1.5"></span>
    <svg class="w-4 h-4 mr-1" viewBox="0 0 16 16"><circle cx="8" cy="8" r="6.500" fill="none" stroke="#a09c95" stroke-width="2" stroke-dasharray="8 2"/><path d="M5 4l6 5-2 0 1 4-2-3-2 1z" fill="#8f8b83"/></svg>
    <div class="relative"><select aria-label="Mode" disabled class="appearance-none w-[114px] h-[25px] bg-[#d5d0c8] text-[#555] pl-1 italic rounded-none opacity-100 border-r-[16px] border-[#eeeeee]"><option>Normal</option></select><svg class="absolute right-1 top-2 w-2 h-2 opacity-50"><use href="#i-arrow"/></svg></div>
    <svg class="w-4 h-4 ml-1.5 mr-2" viewBox="0 0 16 16"><path d="M2 1l8 7-3 1-2 3-3-3z" fill="#a09c95"/><path d="M8 9l3 6 4-2-3-4z" fill="#f4f0e8" stroke="#a09c95"/></svg>
    <svg class="w-4 h-4" viewBox="0 0 16 16"><circle cx="10" cy="6" r="4" fill="none" stroke="#a09c95" stroke-width="3" stroke-dasharray="2 1"/><path d="M1 4l6 6-3 4-3-2z" fill="#a09c95"/></svg>
</section>

<main class="flex-1 flex min-h-0">
    <!-- Manager -->
    <aside class="w-[276px] flex flex-col shrink-0 border-r border-[#b9bcc8]">
        <div class="h-[22px] flex items-center pl-1.5 pr-1.5 text-[#444]">Manager
            <svg class="w-2.5 h-2.5 ml-auto mr-2" viewBox="0 0 10 10"><rect x="1" y="2" width="8" height="6" fill="#fff" stroke="#888"/><path d="M3 5h4" stroke="#888" stroke-width="2"/></svg>
            <svg class="w-3 h-3"><use href="#i-close"/></svg>
        </div>
        <div class="h-[39px] flex pl-px relative">
            <button class="w-[57px] bg-[#fcfcfc] border border-b-0 border-[#b9bcc8] grid place-items-center" aria-label="History"><svg class="w-8 h-8" viewBox="0 0 32 32"><circle cx="16" cy="18" r="13" fill="#d8401c"/><circle cx="15" cy="16" r="12.500" fill="#fbd76a" stroke="#b03010" stroke-width="2"/><path d="M15 5v3m0 16v3M4 16h3m17 0h3M7 8l2 2m12 12l2 2M7 24l2-2" stroke="#8d1c08" stroke-width="2"/><path d="M14 17L20 6l7-4-1 9-11 8z" fill="#f5b21a" stroke="#8d3a08"/></svg></button>
            <button class="w-[60px] grid place-items-center" aria-label="Roles"><svg class="w-8 h-8" viewBox="0 0 32 32"><path d="M1 19l15-7 15 6v5L15 31 1 25z" fill="#0d6f96"/><path d="M1 19l15-7 15 6-16 8z" fill="#2fb0d8"/><path d="M11 18l5-3 6 3-6 4z" fill="#062f45"/><path d="M16 22l-5-6h3v-4h5v4h3z" fill="#d8202a"/><path d="M11 2q5-3 10 0v3l-2 7h-6l-2-7z" fill="#f29a1c" stroke="#a0500a"/><path d="M11 5q5 2 10 0" stroke="#a0500a" fill="none"/></svg></button>
            <button class="w-[60px] grid place-items-center" aria-label="Visual"><svg class="w-8 h-8" viewBox="0 0 32 32"><ellipse cx="10" cy="20" rx="6" ry="5" fill="#bcdcec" stroke="#1f5878" stroke-width="2"/><ellipse cx="23" cy="22" rx="6" ry="5" fill="#bcdcec" stroke="#1f5878" stroke-width="2"/><path d="M4 20Q0 15 3 11l8-5 3 1M29 21q3-5 1-9l-5-2" fill="none" stroke="#1f5878" stroke-width="2"/></svg></button>
            <button class="w-[60px] grid place-items-center" aria-label="Scene"><svg class="w-8 h-8" viewBox="0 0 32 32"><path d="M0 14h32v11H0z" fill="#7d3020"/><path d="M0 17h32M0 20h32" stroke="#3d1208"/><path d="M0 25h32v6H0z" fill="#fff2dc"/><path d="M0 28h32" stroke="#f0a050" stroke-width="4" stroke-dasharray="6 4"/><circle cx="16" cy="14" r="10.500" fill="url(#gBall)"/></svg></button>
        </div>
        <div class="flex-1 flex flex-col min-h-0 border-t border-l border-[#b9bcc8] bg-[#f4f5f7] px-0.5 pb-px gap-0.5">
            <div class="flex gap-0.5">
                <div class="relative"><select aria-label="Show" class="appearance-none w-[151px] h-[27px] bg-[#fcfcfc] border border-[#b0b4bc] pl-[3px] italic rounded-none"><option>Show Most</option></select><svg class="absolute right-1 top-2 w-2 h-2"><use href="#i-arrow"/></svg></div>
                <input type="text" aria-label="Search" class="flex-1 min-w-0 h-[27px] bg-white border border-[#b0b4bc]">
            </div>
            <div class="flex-1 border border-[#b0b4bc] bg-white px-px relative">
                <ul class="h-full text-[#111] leading-[18px] bg-[repeating-linear-gradient(#ffffff_0px_18px,#f4f4f4_18px_36px)]">
                    <li class="h-[18px] flex items-center gap-1.5 pl-[3px]"><svg class="w-4 h-4"><use href="#i-root"/></svg>P-40</li>
                    <li class="h-[18px] flex items-center pl-[3px]"><span class="w-[9px] h-[9px] border border-[#777] bg-white"></span><svg class="w-4 h-4 ml-1.5 mr-1.5"><use href="#i-folder"/></svg>Solid(1)</li>
                    <li class="h-[18px] flex items-center pl-[3px]"><span class="w-[9px] h-[9px] border border-[#777] bg-white"></span><svg class="w-4 h-4 ml-1.5 mr-1.5"><use href="#i-folder"/></svg>Surface(4)</li>
                    <li class="h-[18px] flex items-center pl-[3px]"><span class="w-[9px] h-[9px] border border-[#777] bg-white"></span><svg class="w-4 h-4 ml-1.5 mr-1.5"><use href="#i-folder"/></svg>Wireframe(1)</li>
                    <li class="h-[18px] flex items-center pl-[3px]"><span class="w-[9px] h-[9px] border border-[#777] bg-white"></span><svg class="w-4 h-4 ml-1.5 mr-1.5"><use href="#i-folderopen"/></svg>History</li>
                    <li class="h-[18px] flex items-center pl-[31px] gap-1.5 text-[#8c8c8c]"><svg class="w-4 h-4"><use href="#i-plane"/></svg>XY</li>
                    <li class="h-[18px] flex items-center pl-[31px] gap-1.5 text-[#8c8c8c]"><svg class="w-4 h-4"><use href="#i-plane"/></svg>XZ</li>
                    <li class="h-[18px] flex items-center pl-[31px] gap-1.5 text-[#8c8c8c]"><svg class="w-4 h-4"><use href="#i-plane"/></svg>YZ</li>
                    <li class="h-[18px] flex items-center pl-[17px] text-[#8c8c8c]"><span class="w-[9px] h-[9px] border border-[#777] bg-white"></span><svg class="w-4 h-4 ml-[5px] mr-1.5"><use href="#i-folder"/></svg>___References</li>
                    <li class="h-[18px] flex items-center pl-[17px] text-[#8c8c8c]"><span class="w-[9px] h-[9px] border border-[#777] bg-white"></span><svg class="w-4 h-4 ml-[5px] mr-1.5"><use href="#i-folder"/></svg>___Fuselage</li>
                    <li class="h-[18px] flex items-center pl-[31px] gap-1.5 text-[#8c8c8c]"><svg class="w-4 h-4"><use href="#i-wing"/></svg>Wing-L</li>
                    <li class="h-[18px] flex items-center pl-[31px] gap-1.5 text-[#0000f0]"><svg class="w-4 h-4"><use href="#i-left"/></svg>-----FEATURE FROZEN HERE-----</li>
                    <li class="h-[18px] flex items-center pl-[31px] gap-1.5"><svg class="w-4 h-4"><use href="#i-reverse"/></svg>Reverse2</li>
                    <li class="h-[18px] flex items-center pl-[31px] gap-1.5"><svg class="w-4 h-4"><use href="#i-extend"/></svg>Extend1</li>
                    <li class="h-[18px] flex items-center pl-[31px] gap-1.5"><svg class="w-4 h-4"><use href="#i-extend"/></svg>Extend2</li>
                    <li class="h-[18px] flex items-center pl-[31px] gap-1.5"><svg class="w-4 h-4"><use href="#i-combine"/></svg>Combine1_Add</li>
                    <li class="h-[18px] flex items-center pl-[31px] gap-1.5"><svg class="w-4 h-4"><use href="#i-fillet4"/></svg>Fillet4</li>
                    <li class="h-[18px] flex items-center pl-[31px] gap-1.5 text-[#8c8c8c]"><svg class="w-4 h-4"><use href="#i-curve"/></svg>CurveList9</li>
                    <li class="h-[18px] flex items-center pl-[31px] gap-1.5"><svg class="w-4 h-4"><use href="#i-dome"/></svg>Dome2</li>
                    <li class="h-[18px] flex items-center pl-[31px] gap-1.5 text-[#8c8c8c]"><svg class="w-4 h-4"><use href="#i-sketch"/></svg>Sketch43</li>
                    <li class="h-[18px] flex items-center pl-[31px] gap-1.5"><svg class="w-4 h-4"><use href="#i-trim"/></svg>Trim9</li>
                    <li class="h-[18px] flex items-center pl-[31px] gap-1.5 text-[#f01020]"><svg class="w-4 h-4"><use href="#i-stop"/></svg>----- MODEL STOP HERE -----</li>
                </ul>
                <!-- Tree connector lines -->
                <svg class="absolute left-0 top-0 w-8 h-[400px] pointer-events-none" viewBox="0 0 32 400"><path d="M8.500 18v4m0 9v9m0 9v9m0 9v9M22.500 90v58m0 10v8m0 10v212M24 99.500h6M24 117.500h6M24 135.500h6M24 189.500h6M24 207.500h6M24 225.500h6M24 243.500h6M24 261.500h6M24 279.500h6M24 297.500h6M24 315.500h6M24 333.500h6M24 351.500h6M24 369.500h6M24 387.500h6" fill="none" stroke="#777" stroke-dasharray="1 1"/></svg>
            </div>
            <button class="h-[29px] shrink-0 border border-[#b0b4bc] bg-[#fcfcfc] flex items-center pl-[5px] gap-[7px] font-bold italic text-[#333]"><svg class="w-2 h-2.5" viewBox="0 0 8 10"><path d="M0 0l8 5-8 5z" fill="#555a62"/></svg>Replay</button>
        </div>
    </aside>

    <!-- Document -->
    <section class="flex-1 flex flex-col min-w-0 pl-px">
        <div class="h-[27px] flex items-stretch border-b border-[#b9bcc8] shrink-0 pl-[3px] pt-px">
            <div class="-mb-px w-[212px] bg-[#fdfdfd] border border-b-0 border-[#b9bcc8] flex items-center pl-3 whitespace-nowrap">
                <svg class="w-3 h-3 mr-1.5 shrink-0" viewBox="0 0 12 12"><path d="M6 1v10M1 6h10" stroke="#7d6a3c" stroke-width="2"/></svg>P40_Based-V03.Z3 - [P-40]<svg class="w-2.5 h-2.5 ml-auto mr-3 shrink-0" viewBox="0 0 10 10"><path d="M1 1l8 8M9 1l-8 8" stroke="#7d6a3c" stroke-width="2"/></svg>
            </div>
            <svg class="w-3 h-3 ml-[7px] mt-[5px]" viewBox="0 0 12 12"><path d="M6 1v10M1 6h10" stroke="#999" stroke-width="2"/></svg>
            <svg class="w-3 h-3 ml-auto mr-[7px] mt-1.5" viewBox="0 0 12 12"><path d="M2 2h8M2 5h8L6 9z" fill="#fff" stroke="#777"/></svg>
        </div>
        <div class="flex-1 relative bg-white border-x border-b border-[#b9bcc8] overflow-hidden">
            <!-- Model view -->
            <svg class="absolute inset-0 w-full h-full" viewBox="279 233 1640 888" preserveAspectRatio="xMidYMid meet">
                <defs>
                    <path id="hull" d="M455 594C500 583 560 579 620 577C700 575 800 574 866 574L878 572L887 597H1171L1287 522C1400 529 1500 540 1592 550C1700 564 1800 579 1879 592V698L1590 744L1430 766C1380 773 1330 782 1280 793C1240 803 1210 807 1175 815C1120 828 1060 838 1002 841C960 844 910 845 863 845C800 845 740 843 680 841C620 838 550 832 525 825C500 818 493 811 490 798C487 780 489 765 480 749C474 739 466 733 455 730Z"/>
                    <path id="nose" d="M319 662C350 628 390 608 452 595V729C400 718 350 695 319 662Z"/>
                    <clipPath id="hullClip"><use href="#hull"/></clipPath>
                    <clipPath id="noseClip"><use href="#nose"/></clipPath>
                    <linearGradient id="body" x1="0" x2="1"><stop offset="0" stop-color="#7ba4b6"/><stop offset=".5" stop-color="#7095a5"/><stop offset=".75" stop-color="#6d919f"/><stop offset="1" stop-color="#7197a7"/></linearGradient>
                    <linearGradient id="wing" x1="0" x2="1"><stop offset="0" stop-color="#7ea7b9"/><stop offset="1" stop-color="#6c909f"/></linearGradient>
                    <linearGradient id="hiFade" gradientUnits="userSpaceOnUse" x1="510" x2="870" y1="0" y2="0"><stop offset="0" stop-color="#a9cfe2" stop-opacity="0"/><stop offset=".5" stop-color="#a6ccdf"/><stop offset="1" stop-color="#b0d6e9"/></linearGradient>
                    <linearGradient id="hiOut" gradientUnits="userSpaceOnUse" x1="860" x2="980" y1="0" y2="0"><stop offset="0" stop-color="#a9cfe2"/><stop offset="1" stop-color="#8db3c5" stop-opacity="0"/></linearGradient>
                    <filter id="b3" filterUnits="userSpaceOnUse" x="279" y="479" width="1640" height="408"><feGaussianBlur stdDeviation="4"/></filter>
                    <filter id="b7" filterUnits="userSpaceOnUse" x="279" y="479" width="1640" height="408"><feGaussianBlur stdDeviation="8"/></filter>
                </defs>
                <rect x="279" y="479" width="1640" height="408" fill="#ffe6e6"/>
                <path d="M279 478.500h1640M279 887.500h1640" stroke="#f58a8a"/>
                <use href="#nose" fill="#7599a9"/>
                <g clip-path="url(#noseClip)" fill="none">
                    <path d="M320 655Q370 628 460 632" stroke="#648593" stroke-width="14" filter="url(#b7)"/>
                    <path d="M330 668H460" stroke="#7fa7b9" stroke-width="12" filter="url(#b3)"/>
                    <path d="M345 675Q385 690 430 696" stroke="#a9cfe2" stroke-width="11" filter="url(#b3)"/>
                    <path d="M370 705Q420 714 460 708" stroke="#6a8b99" stroke-width="6" filter="url(#b3)"/>
                </g>
                <use href="#nose" fill="none" stroke="#7a6d78"/>
                <use href="#hull" fill="url(#body)"/>
                <g clip-path="url(#hullClip)" fill="none">
                    <path d="M450 600C520 584 600 581 870 578" stroke="#6c8f9e" stroke-width="9" filter="url(#b3)"/>
                    <path d="M560 648H1000" stroke="#6d90a0" stroke-width="26" filter="url(#b7)"/>
                    <path d="M530 622C590 611 700 611 876 620" stroke="url(#hiFade)" stroke-width="24" filter="url(#b7)"/>
                    <path d="M600 616C700 611 800 615 876 620" stroke="url(#hiFade)" stroke-width="9" filter="url(#b3)"/>
                    <path d="M868 620Q900 610 925 600H1000" stroke="url(#hiOut)" stroke-width="17" filter="url(#b3)"/>
                    <path d="M900 602H1160" stroke="#86adbf" stroke-width="9" filter="url(#b7)"/>
                    <path d="M1165 604Q1240 556 1300 553C1450 558 1650 578 1885 600" stroke="#a5ccde" stroke-width="22" filter="url(#b7)"/>
                    <path d="M1250 558Q1300 549 1450 562L1885 600" stroke="#a5ccde" stroke-width="6" filter="url(#b3)"/>
                    <path d="M1285 526C1450 532 1700 562 1880 593" stroke="#6b8e9c" stroke-width="10" filter="url(#b3)"/>
                    <path d="M455 708Q480 698 486 730T494 800" stroke="#587683" stroke-width="13" filter="url(#b7)"/>
                    <ellipse cx="474" cy="703" rx="12" ry="9" fill="#b4daec" filter="url(#b3)"/>
                    <path d="M504 762Q508 785 506 803" stroke="#b8def0" stroke-width="9" filter="url(#b3)"/>
                    <path d="M525 808C650 816 780 818 920 817C1050 813 1180 800 1280 773L1600 724L1885 685" stroke="#5a7882" stroke-width="14" filter="url(#b7)"/>
                    <path d="M1080 698Q1170 712 1212 727" stroke="#a9cfe2" stroke-width="13" filter="url(#b3)"/>
                    <path d="M1205 747L1225 747" stroke="#203038" stroke-width="6" filter="url(#b3)"/>
                    <path d="M800 768C840 790 920 790 1006 785S1160 770 1215 758" stroke="#5f7e88" stroke-width="8" filter="url(#b3)"/>
                    <path d="M784 750L791 763" stroke="#b8def0" stroke-width="8" filter="url(#b3)"/>
                </g>
                <path d="M802 678L1018 678L1211 747V750C1170 760 1090 770 1006 776C940 781 880 780 856 775C820 768 800 760 797 742Z" fill="url(#wing)"/>
                <g fill="none" stroke="#101820">
                    <path d="M802 678C768 688 748 712 748 737C750 775 790 800 916 802C1020 800 1130 788 1184 778C1230 769 1254 755 1254 736C1252 710 1230 695 1184 686C1130 676 1050 670 1006 668C960 664 900 664 863 667C830 670 808 674 802 678Z"/>
                    <path d="M802 678C810 688 850 692 881 692C920 692 1000 686 1013 682Q1020 680 1018 678C960 675 860 678 802 678"/>
                    <path d="M890 667Q960 668 1010 677" stroke="#506a76"/>
                    <path d="M802 678L797 742V750C805 770 860 778 920 779C1000 778 1150 763 1177 759Q1212 752 1211 747"/>
                    <path d="M748 737C780 738 792 737 797 745M1254 734Q1220 736 1211 747"/>
                    <path d="M1018 678L1211 747" stroke-width="2"/>
                    <path d="M820 677Q860 675 910 677" stroke="#a9cfe2"/>
                </g>
                <use href="#hull" fill="none" stroke="#2020e8" stroke-dasharray="11 3"/>
                <path d="M453.500 594v136" stroke="#ffe6e6"/>
                <circle cx="877.500" cy="571" r="6.500" fill="none" stroke="#000" stroke-width="1.500"/>
                <use href="#hull" fill="none"/>
                <path d="M279 661.500h1640" stroke="#4444f0"/>
                <path d="M1002.500 479v408" stroke="#52ee52"/>
                <g opacity=".55">
                    <path d="M999 662V627h-3l6-16 6 16h-3v35z" fill="#4a66d8"/>
                    <path d="M1002 659h34v-4l17 7-17 7v-4h-34z" fill="#30c050"/>
                    <circle cx="1002" cy="662" r="6" fill="#d02020"/>
                    <text x="1002" y="608" text-anchor="middle" font-size="20" fill="#2020f0">Z</text>
                    <text x="1066" y="669" text-anchor="middle" font-size="20" fill="#30c050">Y</text>
                </g>
                <!-- Axis triad -->
                <path d="M332 1064v-36h-3l6-17 6 17h-3v36z" fill="#1a1ae8" stroke="#1010a0" stroke-width=".5"/>
                <path d="M334 1060v-32" stroke="#b8b8ff" stroke-width="1.500"/>
                <path d="M335 1061h36v-4l17 7-17 7v-4h-36z" fill="#10e010" stroke="#089008" stroke-width=".5"/>
                <path d="M342 1063h30" stroke="#b8ffb8" stroke-width="1.500"/>
                <circle cx="335" cy="1064" r="6.500" fill="#c81010"/>
                <text x="335" y="1071" text-anchor="middle" font-size="18" fill="#ff1010">X</text>
                <text x="335" y="1009" text-anchor="middle" font-size="20" fill="#1010ff">Z</text>
                <text x="399" y="1071" text-anchor="middle" font-size="20" fill="#10f010">Y</text>
            </svg>
            <p class="absolute left-[15px] top-[25px] font-['Liberation_Sans',sans-serif] not-italic text-[13px] leading-4">Hold down &lt;F2&gt; for dynamic viewing.<br>&lt;F8&gt; or &lt;Shift-roll&gt; to find next valid filter setting.</p>
            <p class="absolute left-1.5 bottom-px text-[20px] leading-6">176.238 mm</p>

            <!-- View toolbar -->
            <div class="absolute left-[546px] top-[3px] flex items-center">
                <svg class="w-[18px] h-[18px] mr-[9px]" viewBox="0 0 18 18"><path d="M3 0h11v15l3 3H3z" fill="#15527a"/><circle cx="10" cy="3" r="1.700" fill="#fff"/><path d="M9 5l-3 3m3-3l1 5 3 5m-3-5l-4 5m4-9l4 2" stroke="#fff" stroke-width="1.800" fill="none"/></svg>
                <svg class="w-[18px] h-[18px] mr-[9px]" viewBox="0 0 18 18"><path d="M1 13l9-10 4-2 3 3-9 11-4 2z" fill="#f3e7c0" stroke="#999"/><path d="M1 13l3-4 5 4-4 4-3 0z" fill="#d8303a"/><path d="M10 3l4-2 3 3-3 4z" fill="#f0c020"/></svg>
                <svg class="w-[18px] h-[18px] mr-[9px]" viewBox="0 0 18 18"><path d="M1 8l8 3 8-4v6l-8 4-8-4z" fill="#1f85ad"/><path d="M1 8l8-5 8 4-8 5z" fill="#ffe23a" stroke="#b98a10"/><path d="M9 0v8" stroke="#2a9a2a" stroke-width="2"/></svg>
                <svg class="w-[18px] h-[18px]"><use href="#i-cube"/></svg><svg class="w-2 h-2 ml-1 mr-2"><use href="#i-arrow"/></svg>
                <svg class="w-[18px] h-[18px]" viewBox="0 0 18 18"><path d="M4 6l7-3 7 3v7l-7 4-7-4z" fill="#1f85ad"/><path d="M11 9l7-3v7l-7 4z" fill="#0d5070"/><rect x="1" y="1" width="8" height="8" fill="#d8eef8" stroke="#1f6f98"/><path d="M3 6l3-2 1 3" fill="none" stroke="#1f6f98"/></svg><svg class="w-2 h-2 ml-1 mr-2"><use href="#i-arrow"/></svg>
                <svg class="w-[18px] h-[18px]" viewBox="0 0 18 18"><path d="M1 5l8-4 8 4v8l-8 4-8-4z" fill="#d8401c"/><path d="M1 5l8-4v8l-8 4z" fill="#2387b0"/><path d="M9 1l8 4-8 5z" fill="#0d5070"/><path d="M9 10l8-5v8l-8 4z" fill="#ffc425"/></svg><svg class="w-2 h-2 ml-1 mr-2"><use href="#i-arrow"/></svg>
                <svg class="w-[18px] h-[18px]" viewBox="0 0 18 18"><rect x="1" y="1" width="16" height="16" fill="#bcdff0" stroke="#3a8fb5"/><path d="M5 3h5l4 4v8H5z" fill="#ffd23a"/><circle cx="9" cy="9" r="6" fill="none" stroke="#c9a020" stroke-width="1.500"/><path d="M13 13l4 4" stroke="#555" stroke-width="2"/></svg><svg class="w-2 h-2 ml-1 mr-2"><use href="#i-arrow"/></svg>
                <svg class="w-[18px] h-[18px] mr-[9px]" viewBox="0 0 18 18"><rect x="1" y="1" width="16" height="16" fill="#fff" stroke="#6aa5c2"/><rect x="3" y="11" width="4" height="4" fill="#1f6f98"/><path d="M5 7V4h3M14 9v4q-2 2-4 1M13 4v2" fill="none" stroke="#5aa5c4"/></svg>
                <svg class="w-[18px] h-[18px]" viewBox="0 0 18 18"><path d="M3 1v13M15 1v13M3 6h12" stroke="#3a8fb5" stroke-width="1.500"/><path d="M3 17h12" stroke="#d01822" stroke-width="2"/></svg><svg class="w-2 h-2 ml-1 mr-2"><use href="#i-arrow"/></svg>
                <svg class="w-[18px] h-[18px]" viewBox="0 0 18 18"><rect x="0" y="1" width="18" height="13" fill="#85888c" stroke="#5a5d60"/><path d="M5 5l4-2 4 2v5l-4 2-4-2z" fill="#2aa0d0"/><path d="M5 5l4 2 4-2M9 7v5" stroke="#0d5070" fill="none"/><path d="M4 17h10" stroke="#777" stroke-width="2"/></svg><svg class="w-2 h-2 ml-1 mr-2"><use href="#i-arrow"/></svg>
                <button class="w-[17px] h-[17px] bg-black border border-[#333] mr-[9px]" aria-label="Edge colour"></button>
                <button class="w-[17px] h-[17px] bg-[#92c3db] border border-[#222] mr-2" aria-label="Background colour"></button>
                <svg class="w-[18px] h-[18px]" viewBox="0 0 18 18"><path d="M0 7v5l8 4 9-4V6l-9 4z" fill="#0f7f95"/><path d="M0 7l9-4 9 3-9 5z" fill="#4fc8c0" stroke="#0f6f85"/></svg><svg class="w-2 h-2 ml-1 mr-1"><use href="#i-arrow"/></svg>
                <div class="relative ml-px">
                    <select aria-label="Layer" class="appearance-none w-[131px] h-[26px] bg-white border border-[#b9bcc8] pl-[39px] italic rounded-none"><option>Layer0000</option></select>
                    <svg class="absolute left-1.5 top-1 w-8 h-[18px]" viewBox="0 0 32 18"><path d="M3 11Q0 7 2 4q3-4 7 0 2 3-1 7v4H4z" fill="#fff6c0" stroke="#a59a50"/><path d="M4 14h4v3H4z" fill="#888"/><circle cx="23" cy="9" r="6.500" fill="#f5e02a" stroke="#3a7f9e"/></svg>
                    <svg class="absolute right-1 top-2 w-2 h-2"><use href="#i-arrow"/></svg>
                </div>
            </div>

            <!-- Output window -->
            <div class="absolute right-[7px] bottom-px w-[351px] h-[104px] bg-[#e8eaec] border border-[#686c72] p-[5px] pt-0 flex flex-col">
                <div class="h-[25px] shrink-0 flex items-center font-bold text-[#444] pl-[5px] pt-[3px]">Output
                    <span class="ml-auto w-2 h-2 bg-[#1a1a1a] mr-2.5"></span>
                    <svg class="w-3 h-3 mr-1"><use href="#i-close"/></svg>
                </div>
                <div class="flex-1 min-h-0 bg-white border border-[#b9bcc8] flex">
                    <div class="flex-1 overflow-hidden flex flex-col justify-end pl-1 pb-[3px]"><p>Part [P-40] activated for editing.</p><p>Trim faces to curves</p><p>Saving file...</p><p>"Save" was successful.</p></div>
                    <div class="w-[18px] bg-[#dce0e8] m-px flex flex-col items-center py-1.5">
                        <svg class="w-2.5 h-1.5" viewBox="0 0 10 6"><path d="M0 6l5-6 5 6z" fill="#444"/></svg>
                        <span class="mt-auto mb-[7px] w-[17px] h-[9px] bg-[#f0f2f4] border border-[#888]"></span>
                        <svg class="w-2.5 h-1.5" viewBox="0 0 10 6"><path d="M0 0l5 6 5-6z" fill="#444"/></svg>
                    </div>
                </div>
            </div>
        </div>
    </section>
</main>

<!-- Status bar -->
<footer class="h-[34px] flex items-center pl-1.5 pt-px shrink-0 text-[#333]">
    <span>Select command or entity.</span>
    <span class="ml-auto w-px h-[30px] bg-[#8d9196] mr-[7px]"></span>
    <button class="w-[23px] h-[23px] bg-[#fddf7d] border border-[#c79a3c] grid place-items-center mr-1.5" aria-label="Tools"><svg class="w-3.5 h-3.5" viewBox="0 0 14 14"><rect x="0" y="1" width="14" height="12" fill="#f4f6fb" stroke="#4a78b8"/><path d="M0 2h14" stroke="#4a78b8" stroke-width="3"/><path d="M3 4v8" stroke="#555" stroke-dasharray="1 1"/><path d="M5 6h6" stroke="#333" stroke-width="2"/><path d="M8 6v6" stroke="#c02020" stroke-width="2"/></svg></button>
    <button class="w-[23px] h-[23px] bg-[#fddf7d] border border-[#c79a3c] grid place-items-center mr-1.5" aria-label="Output"><svg class="w-3.5 h-3.5" viewBox="0 0 14 14"><rect x="0" y="1" width="14" height="12" fill="#e8ecf6" stroke="#4a78b8"/><path d="M0 2h14" stroke="#4a78b8" stroke-width="3"/><path d="M2 6h10M2 8h10M2 10h8" stroke="#777"/></svg></button>
    <input type="text" aria-label="Command" class="w-[351px] h-[22px] bg-white border border-[#b9bcc8]">
</footer>
</body>
</html>
